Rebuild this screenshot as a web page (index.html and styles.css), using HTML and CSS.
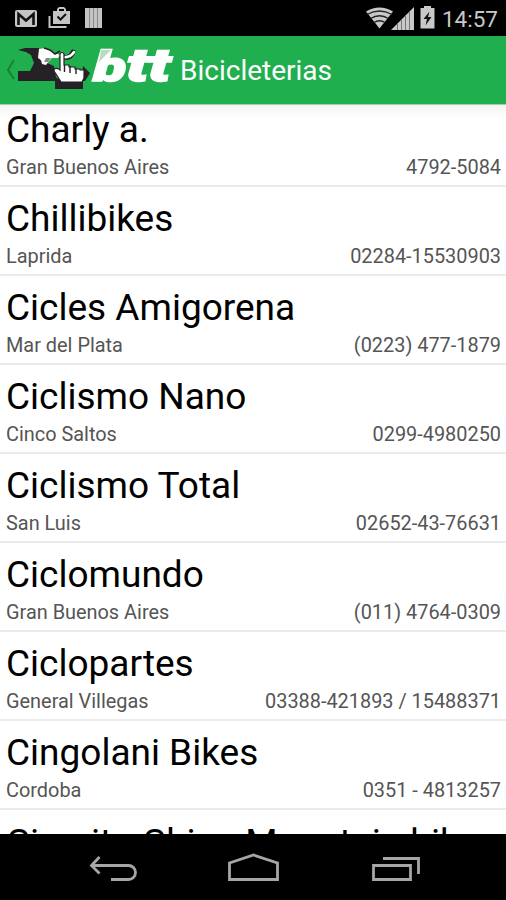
FILE: index.html
```html
<!DOCTYPE html>
<html lang="es">
<head>
    <meta charset="UTF-8">
    <meta name="viewport" content="width=device-width, initial-scale=1.0">
    <title>Bicicleterias</title>
    <link rel="stylesheet" href="styles.css">
</head>
<body>
    <div class="screen">
        <div class="status-bar">
            <svg class="status-left" width="110" height="36" viewBox="0 0 110 36">
                <rect x="15" y="10" width="22" height="17" rx="2" fill="#c4c4c4"/>
                <path d="M18.500 25V14l7.500 6.500 7.500-6.500v11" fill="none" stroke="#111" stroke-width="2.600"/>
                <path d="M49.500 16v11h17" fill="none" stroke="#c4c4c4" stroke-width="2"/>
                <path d="M53 11h4V9l2-2h5l2 2v2h4v13H53zM59 11h5V9h-5z" fill="#c4c4c4" fill-rule="evenodd"/>
                <path d="M57.500 16.500l3 3 5.500-5.500" fill="none" stroke="#111" stroke-width="2"/>
                <rect x="85" y="8" width="17" height="20" fill="#c4c4c4"/>
                <path d="M89.500 8v20M93.500 8v20M97.500 8v20" stroke="#888" stroke-width="1"/>
            </svg>
            <div class="status-right">
                <svg width="76" height="36" viewBox="-2 0 76 36">
                    <path d="M0 11.500Q13.500 3.500 27 11.500L13.500 28.500z" fill="#c8c8c8"/>
                    <path d="M1 14.500q12.500-7 25 0M4.500 18.500q9-5.500 18 0M8 22.500q5.500-3.500 11 0" fill="none" stroke="#222" stroke-width="1.300"/>
                    <path d="M25 30L48 7v23z" fill="#c8c8c8"/>
                    <path d="M31.500 23v7M35.500 19v11M39.500 15v15M43.500 11v19" stroke="#777" stroke-width="1"/>
                    <path d="M54.500 8h3.500V6h7v2h3.500v20.500h-14z" fill="#c8c8c8"/>
                    <path d="M63.500 11.500L57.500 19h3.500l-1.500 6.500 6-8.500H62z" fill="#111"/>
                </svg>
                <span class="clock">14:57</span>
            </div>
        </div>

        <div class="action-bar">
            <svg class="logo" width="176" height="68" viewBox="0 36 176 68">
                <path d="M14 60l-6 10 6 9" fill="none" stroke="#168138" stroke-width="2"/>
                <!-- hammer arm and pointing hand -->
                <path d="M18 50l7-2 14 0 1 12 14 6 2 11 4 4H18V71h12l4-8-3-8-5-3z" fill="#252126"/>
                <path d="M39 49l6-1 7 4 8 3-2 3-6 0-3 3-3 4-4-1-1-4-3-2z" fill="#fff"/>
                <path d="M46 58l5 0-3 4-4 0z" fill="#8a888a"/>
                <path d="M44 48l6 2 5 4 5-3" fill="none" stroke="#252126" stroke-width="1.500"/>
                <path d="M64 57q6 2 9-5" fill="none" stroke="#252126" stroke-width="5" stroke-linecap="round"/>
                <path d="M64 57q6 1 10-5" fill="none" stroke="#fff" stroke-width="2.600" stroke-linecap="round"/>
                <path d="M55 79h28v10H55zM83 66l7 7-5 8h-4z" fill="#252126"/>
                <path d="M60 54q2-3 4 0v11h5v2h6v2h5v1h4v8l-2 4H61l-3-5-4-6q0-4 5-2l1 1z" fill="#fff" stroke="#252126" stroke-width="1.200"/>
                <path d="M64.500 65v7M70 66v7M76 68v6" stroke="#252126" stroke-width="1.400"/>
                <text class="brand" transform="translate(93 81) skewX(-2)" x="0" y="0" textLength="77" lengthAdjust="spacingAndGlyphs">b<tspan class="brand-t">tt</tspan></text>
                <path d="M101 50h10l-12 12z" fill="#b9dcc0"/>
            </svg>
            <h1>Bicicleterias</h1>
        </div>

        <div class="list">
            <div class="row">
                <div class="name">Charly a.</div>
                <div class="info"><span>Gran Buenos Aires</span><span>4792-5084</span></div>
            </div>
            <div class="row">
                <div class="name">Chillibikes</div>
                <div class="info"><span>Laprida</span><span>02284-15530903</span></div>
            </div>
            <div class="row">
                <div class="name">Cicles Amigorena</div>
                <div class="info"><span>Mar del Plata</span><span>(0223) 477-1879</span></div>
            </div>
            <div class="row">
                <div class="name">Ciclismo Nano</div>
                <div class="info"><span>Cinco Saltos</span><span>0299-4980250</span></div>
            </div>
            <div class="row">
                <div class="name">Ciclismo Total</div>
                <div class="info"><span>San Luis</span><span>02652-43-76631</span></div>
            </div>
            <div class="row">
                <div class="name">Ciclomundo</div>
                <div class="info"><span>Gran Buenos Aires</span><span>(011) 4764-0309</span></div>
            </div>
            <div class="row">
                <div class="name">Ciclopartes</div>
                <div class="info"><span>General Villegas</span><span>03388-421893 / 15488371</span></div>
            </div>
            <div class="row">
                <div class="name">Cingolani Bikes</div>
                <div class="info"><span>Cordoba</span><span>0351 - 4813257</span></div>
            </div>
            <div class="row">
                <div class="name">Circuito Chico Mountain bike</div>
            </div>
        </div>

        <div class="nav-bar">
            <svg width="506" height="66" viewBox="0 834 506 66" fill="none" stroke="#a6a6a6" stroke-width="2.800">
                <path d="M99.500 857l-8 8.500 8 8M92 865.500h36.500a7 7 0 0 1 0 14H111"/>
                <path d="M229.500 879.500v-16.500l24-8 24 8v16.500z"/>
                <path d="M373.500 865.500h37v14h-37zM383 858.500h35.500V874"/>
            </svg>
        </div>
    </div>
</body>
</html>
```
FILE: styles.css
```css
body {
    font-family: Roboto, "Liberation Sans", sans-serif;
    background-color: #fff;
    margin: 0;
}
.screen {
    display: flex;
    flex-direction: column;
    height: 900px;
    overflow: hidden;
}
.status-bar {
    display: flex;
    justify-content: space-between;
    height: 36px;
    flex: none;
    background-color: #000;
}
.status-right {
    display: flex;
    gap: 2px;
    padding-right: 8px;
}
.clock {
    color: #c8c8c8;
    font-size: 22.5px;
    line-height: 38px;
}
.action-bar {
    display: flex;
    align-items: center;
    gap: 4px;
    height: 68px;
    flex: none;
    background-color: #20af4e;
}
.brand {
    fill: #fff;
    stroke: #fff;
    stroke-width: 1.6px;
    font-size: 42px;
    font-style: italic;
    font-weight: 900;
}
.brand-t {
    font-size: 46px;
}
h1 {
    margin: 0;
    color: #fff;
    font-size: 28px;
    font-weight: 400;
    line-height: 68px;
    padding-top: 2px;
}
.list {
    flex: 1;
    min-height: 0;
    overflow: hidden;
    display: flex;
    flex-direction: column;
    justify-content: flex-end;
    background: linear-gradient(#f3f3f3, #fff 12px);
    border-top: 1px solid #a5cdb0;
    box-sizing: border-box;
}
.row {
    flex: none;
    box-sizing: border-box;
    height: 89px;
    padding: 9px 5px 0 6px;
    border-bottom: 2px solid #ebebeb;
}
.row:last-child {
    height: 24px;
    padding-top: 10px;
    border-bottom: none;
}
.name {
    color: #000;
    font-size: 37px;
    line-height: 46px;
    white-space: nowrap;
}
.info {
    display: flex;
    justify-content: space-between;
    color: #555;
    font-size: 19.9px;
    line-height: 30px;
}
.nav-bar {
    height: 66px;
    flex: none;
    background-color: #000;
}
```
